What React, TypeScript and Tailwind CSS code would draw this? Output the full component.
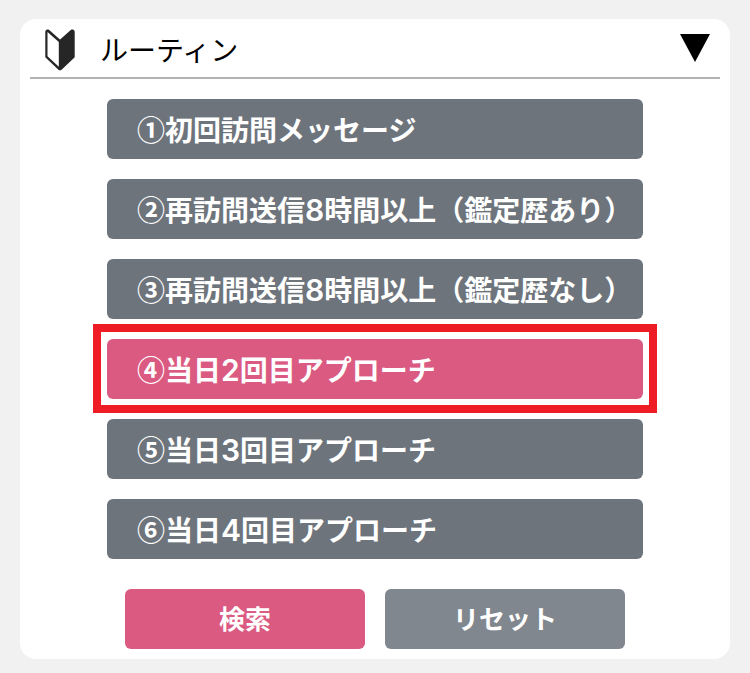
import React from 'react';

interface Routine {
  id: number;
  label: string;
  active?: boolean;
}

const routines: Routine[] = [
  { id: 1, label: '①初回訪問メッセージ' },
  { id: 2, label: '②再訪問送信8時間以上（鑑定歴あり）' },
  { id: 3, label: '③再訪問送信8時間以上（鑑定歴なし）' },
  { id: 4, label: '④当日2回目アプローチ', active: true },
  { id: 5, label: '⑤当日3回目アプローチ' },
  { id: 6, label: '⑥当日4回目アプローチ' },
];

const BeginnerMark: React.FC = () => (
  <svg width="30" height="42" viewBox="0 0 30 42">
    <path
      d="M2 1.2H3.5L15 11.5L26.5 1.2H28L29 2.5V28L15.8 40.5H14.2L1 28V2.5Z"
      fill="#262626"
      stroke="#262626"
      strokeWidth="1.4"
      strokeLinejoin="round"
    />
    <path d="M2.5 3L13.8 13V37.8L2.5 27.3Z" fill="#fff" />
  </svg>
);

// Latin digits are set slightly larger than the surrounding Japanese text
const RoutineLabel: React.FC<{ text: string }> = ({ text }) => (
  <span className="leading-none">
    {text.split(/([0-9])/).map((part, i) =>
      /[0-9]/.test(part) ? (
        <span key={i} className="font-['Inter'] text-[30px] font-semibold leading-[0]">
          {part}
        </span>
      ) : (
        part
      )
    )}
  </span>
);

const App: React.FC = () => {
  return (
    <div className="h-[673px] w-[750px] bg-[#f1f1f1] px-5 pt-[19px] font-['Noto_Sans_CJK_JP',sans-serif]">
      <div className="h-[640px] rounded-2xl bg-white px-[10px]">
        <div className="flex h-[60px] items-center border-b-2 border-[#b3b3b3] pl-[15px] pr-[10px]">
          <div className="pt-1">
            <BeginnerMark />
          </div>
          <h2 className="ml-[25px] flex-1 pt-px text-[28px] leading-none text-black">ルーティン</h2>
          <svg width="30" height="28" viewBox="0 0 30 28">
            <path d="M0 0H30L15 28Z" fill="#000" />
          </svg>
        </div>
        <ul className="mx-[77px] mt-5 space-y-5">
          {routines.map((routine) => (
            <li key={routine.id} className="relative">
              <button
                className={`flex h-[60px] w-full items-center whitespace-nowrap rounded-[6px] pl-[30px] text-[28px] font-bold text-white ${
                  routine.active ? 'bg-[#da5a82]' : 'bg-[#6d747c]'
                }`}
              >
                <RoutineLabel text={routine.label} />
              </button>
              {routine.active && (
                <div className="absolute -inset-x-[14px] -top-[15px] -bottom-[14px] border-8 border-[#ee1c24]" />
              )}
            </li>
          ))}
        </ul>
        <div className="mt-[30px] flex justify-center gap-5 text-[26px] font-bold text-white">
          <button className="h-[60px] w-[240px] rounded-[6px] bg-[#da5a82] pb-[3px]">検索</button>
          <button className="h-[60px] w-[240px] rounded-[6px] bg-[#81878e] pb-[3px]">リセット</button>
        </div>
      </div>
    </div>
  );
};

export default App;
